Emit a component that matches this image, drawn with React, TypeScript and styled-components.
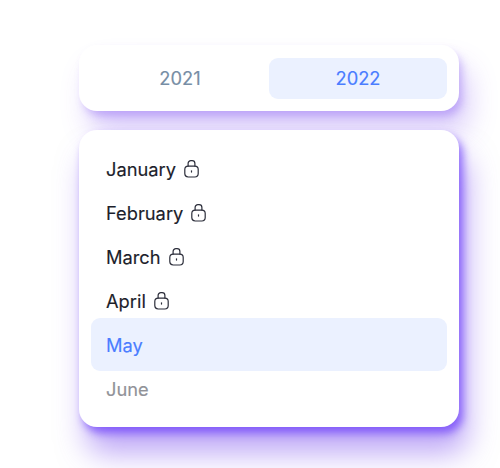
import React from "react";
import styled, { createGlobalStyle } from "styled-components";

const GlobalStyle = createGlobalStyle`
  * { box-sizing: border-box; }
  html, body { margin: 0; background: #fff; overflow: hidden; }
`;

const Page = styled.main`
  width: 500px;
  height: 468px;
  padding: 45px 41px 0 79px;
  display: flex;
  flex-direction: column;
  gap: 19.5px;
  overflow: hidden;
  background: #fff;
  font-family: Inter, sans-serif;
  font-size: 18.3px;
  font-weight: 400;
  -webkit-text-stroke: 0.15px currentColor;
`;

const YearSwitch = styled.div`
  display: grid;
  grid-template-columns: 178px 178px;
  height: 65.5px;
  flex: none;
  padding: 12.5px 12px 12px;
  border-radius: 18px;
  background: #fff;
  box-shadow: 4px 6px 8px -1px rgba(124, 77, 240, 0.34), 10px 22px 28px rgba(124, 77, 240, 0.28);
`;

const YearTab = styled.button<{ $active?: boolean }>`
  border: 0;
  padding: 0;
  border-radius: 9px;
  font: inherit;
  background: ${(p) => (p.$active ? "#ebf1ff" : "transparent")};
  color: ${(p) => (p.$active ? "#4a7dff" : "#778ea5")};
`;

const MonthPanel = styled.ul`
  display: flex;
  flex-direction: column;
  flex: none;
  height: 297px;
  margin: 0;
  padding: 17px 12px;
  list-style: none;
  border-radius: 18px;
  background: #fff;
  box-shadow: 4px 6px 9px rgba(100, 50, 250, 0.65), 8px 26px 30px rgba(124, 77, 240, 0.5);
`;

type Tone = "past" | "current" | "future";
const toneColor: Record<Tone, string> = {
  past: "#1c1e2b",
  current: "#4a7dff",
  future: "#919298",
};

const MonthRow = styled.li<{ $tone: Tone }>`
  display: flex;
  align-items: center;
  gap: 8px;
  flex: none;
  height: ${(p) => (p.$tone === "current" ? 53 : 44)}px;
  margin: ${(p) => (p.$tone === "current" ? "-5px 0 -4px" : "0")};
  padding-left: 15px;
  border-radius: 9px;
  color: ${(p) => toneColor[p.$tone]};
  background: ${(p) => (p.$tone === "current" ? "#ebf1ff" : "transparent")};
`;

const LockSvg = styled.svg`
  width: 15px;
  height: 18px;
  flex: none;
  fill: none;
  stroke: #2b2d3a;
  stroke-width: 1.2;
  stroke-linecap: round;
`;

const Lock = () => (
  <LockSvg viewBox="0 0 15 18">
    <path d="M4.1 6.1V3.5A2.8 2.8 0 0 1 6.9.7H8.1A2.8 2.8 0 0 1 10.9 3.5V6.1" />
    <rect x=".8" y="6.1" width="13.4" height="10.9" rx="3.4" />
    <path d="M7.5 10.8v1.3" />
  </LockSvg>
);

const months: { name: string; tone: Tone }[] = [
  { name: "January", tone: "past" },
  { name: "February", tone: "past" },
  { name: "March", tone: "past" },
  { name: "April", tone: "past" },
  { name: "May", tone: "current" },
  { name: "June", tone: "future" },
];

export default function App() {
  return (
    <>
      <GlobalStyle />
      <Page>
        <YearSwitch>
          <YearTab>2021</YearTab>
          <YearTab $active>2022</YearTab>
        </YearSwitch>
        <MonthPanel>
          {months.map((m) => (
            <MonthRow key={m.name} $tone={m.tone}>
              <span>{m.name}</span>
              {m.tone === "past" && <Lock />}
            </MonthRow>
          ))}
        </MonthPanel>
      </Page>
    </>
  );
}
